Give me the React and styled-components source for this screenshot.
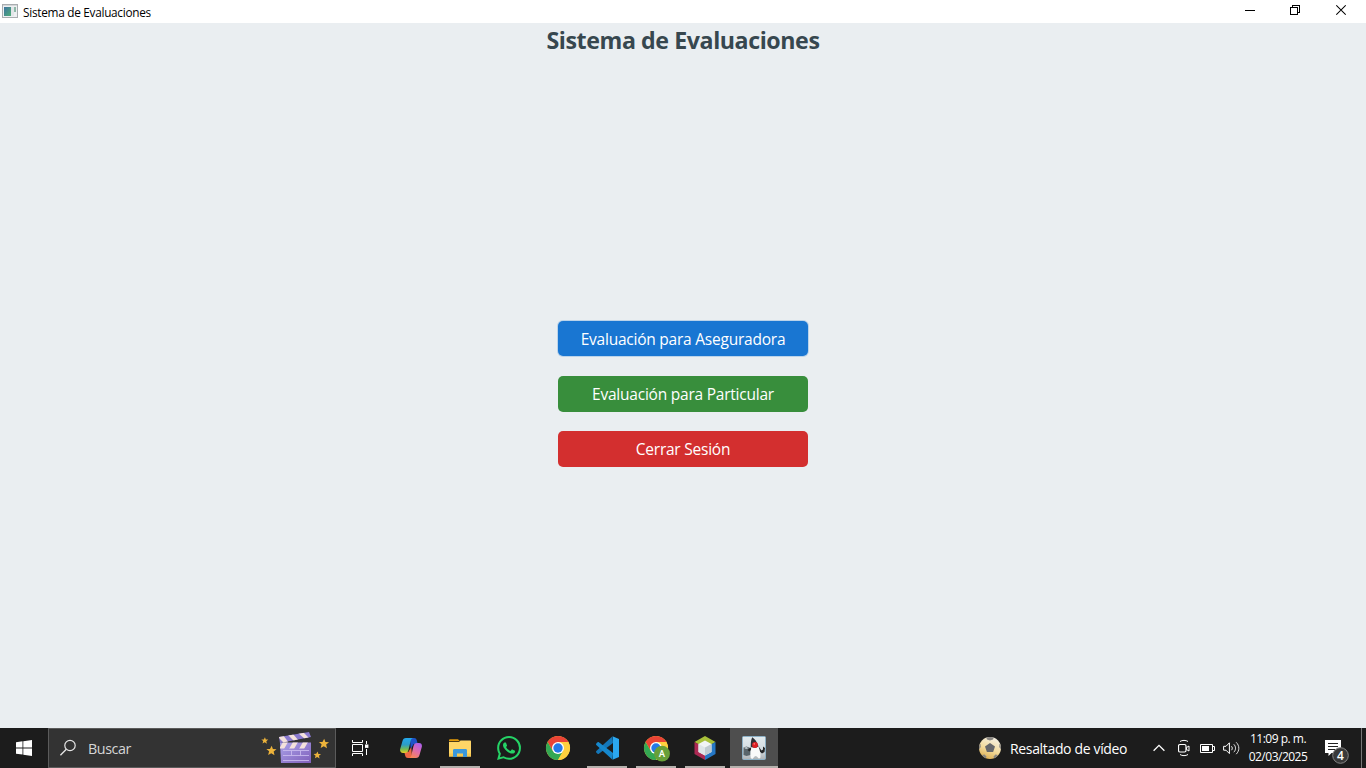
import React from "react";
import styled, { createGlobalStyle, css } from "styled-components";

const GlobalStyle = createGlobalStyle`
  * { box-sizing: border-box; }
  body { margin: 0; overflow: hidden; font-family: "Open Sans", "Noto Sans", sans-serif; }
  svg { display: block; flex: none; }
`;

const Screen = styled.div`
  width: 1366px;
  height: 768px;
  display: flex;
  flex-direction: column;
  background: #eaeef1;
`;

const TitleBar = styled.header`
  height: 23px;
  flex: none;
  display: flex;
  align-items: center;
  background: #fff;
  padding-left: 2px;
`;

const TitleIcon = styled.div`
  padding-bottom: 2px;
`;

const WindowTitle = styled.span`
  margin-left: 5px;
  flex: 1;
  font-size: 11.8px;
  line-height: 22px;
  letter-spacing: -0.28px;
  color: #000;
`;

const WindowButton = styled.button`
  width: ${(p) => p.$width}px;
  height: 23px;
  padding: 0;
  border: 0;
  background: none;
  display: flex;
  justify-content: center;
`;

const Content = styled.main`
  flex: 1;
  display: flex;
  flex-direction: column;
  align-items: center;
`;

const Heading = styled.h1`
  margin: 0;
  height: 35px;
  font-size: 23.2px;
  line-height: 34px;
  font-weight: 700;
  letter-spacing: -0.42px;
  color: #37474f;
`;

const Actions = styled.nav`
  flex: 1;
  display: flex;
  flex-direction: column;
  padding-top: 263px;
  gap: 19px;
`;

const ActionButton = styled.button`
  width: 250px;
  height: 36px;
  padding: 0;
  border: 0;
  border-radius: 5px;
  background: ${(p) => p.$color};
  color: #fff;
  font-family: inherit;
  font-size: 15.5px;
  line-height: 36px;
  letter-spacing: -0.23px;
  ${(p) =>
    p.$focused &&
    css`
      height: 35px;
      margin-bottom: 1px;
      box-shadow: 0 0 0 1px rgba(25, 118, 210, 0.22);
    `}
`;

const TaskBar = styled.footer`
  height: 40px;
  flex: none;
  display: flex;
  background: #1c1c1c;
  color: #fff;
`;

const TaskSlot = styled.div`
  width: 48px;
  height: 40px;
  flex: none;
  margin-left: ${(p) => p.$gap || 0}px;
  display: flex;
  align-items: center;
  justify-content: center;
  background: ${(p) => (p.$active ? "#4e4e4e" : "transparent")};
  ${(p) =>
    p.$running &&
    css`
      background-image: linear-gradient(#b5b1ad, #b5b1ad);
      background-size: ${p.$active ? 48 : 40}px 2px;
      background-position: center bottom;
      background-repeat: no-repeat;
    `}
`;

const SearchBox = styled.div`
  width: 288px;
  height: 40px;
  flex: none;
  display: flex;
  align-items: center;
  padding: 0 4px 0 10px;
  border: 1px solid #5b5b5b;
  background: #333;
`;

const SearchText = styled.span`
  flex: 1;
  margin-left: 11px;
  font-size: 14.3px;
  letter-spacing: -0.4px;
  color: #d6d6d6;
`;

const Tray = styled.div`
  margin-left: auto;
  display: flex;
  align-items: center;
`;

const NewsText = styled.span`
  width: 118px;
  margin-left: 9px;
  margin-right: 25px;
  font-size: 14px;
  white-space: nowrap;
  letter-spacing: -0.34px;
`;

const TrayIcon = styled.div`
  width: ${(p) => p.$width}px;
  height: 40px;
  flex: none;
`;

const Clock = styled.div`
  width: 74px;
  margin-right: 9px;
  text-align: center;
  font-size: 12px;
  line-height: 18px;
  padding-bottom: 1px;
  letter-spacing: -0.5px;
  white-space: nowrap;
`;

const ShowDesktop = styled.div`
  width: 5px;
  height: 40px;
  border-left: 1px solid #777;
`;

const Svg = ({ w, h, children, ...rest }) => (
  <svg width={w} height={h} viewBox={`0 0 ${w} ${h}`} fill="none" {...rest}>{children}</svg>
);

const AppIcon = () => (
  <Svg w={16} h={14}>
    <defs>
      <linearGradient id="pane" x1="0" y1="0" x2="1" y2="1">
        <stop stopColor="#3e73a0" /><stop offset="1" stopColor="#4fae78" />
      </linearGradient>
    </defs>
    <rect x=".5" y=".5" width="15" height="13" fill="#eef0f2" stroke="#a9adb0" />
    <path d="M1 1.5h14" stroke="#d4d6d8" />
    <rect x="2" y="3" width="7" height="9" fill="url(#pane)" />
    <rect x="9" y="3" width="3" height="9" fill="#e2e5e8" />
    <rect x="12" y="3" width="2" height="5" fill="#8fb9a8" />
  </Svg>
);

const MinimizeIcon = () => (
  <Svg w={10} h={23}><path d="M0 10.5h10" stroke="#000" /></Svg>
);
const RestoreIcon = () => (
  <Svg w={10} h={23} shapeRendering="crispEdges">
    <path d="M.5 7.5h7v7h-7zM2.5 7.5v-2h7v7h-2" stroke="#000" />
  </Svg>
);
const CloseIcon = () => (
  <Svg w={10} h={23}><path d="M.3 5.3l9.400 9.400M9.700 5.300L.3 14.700" stroke="#000" strokeWidth="1.100" /></Svg>
);

const WindowsIcon = () => (
  <Svg w={16} h={16}>
    <path fill="#fff" d="M0 2.2L6.500 1.300v6.200H0zM7.300 1.200L16 0v7.500H7.300zM0 8.400h6.500v6.200L0 13.800zM7.300 8.400H16V16l-8.700-1.200z" />
  </Svg>
);

const SearchIcon = () => (
  <Svg w={18} h={18}>
    <circle cx="11" cy="6.5" r="5.2" stroke="#e6e6e6" strokeWidth="1.2" />
    <path d="M7.300 10.300L1.400 16.300" stroke="#e6e6e6" strokeWidth="1.3" />
  </Svg>
);

const Star = ({ x, y, s = 1 }) => (
  <path
    transform={`translate(${x} ${y}) scale(${s})`}
    d="M.7-5.100L2-1.600l3.800.2-3 2.500L3.700 5 .3 2.800-3 4.700l1-3.800-2.900-2.500 3.800-.1z"
    fill="#edb33b"
  />
);

const ClapperIcon = () => (
  <Svg w={70} h={38}>
    <defs>
      <linearGradient id="clap" x1="0" y1="0" x2="1" y2="1">
        <stop stopColor="#aaa2e9" /><stop offset="1" stopColor="#8060bb" />
      </linearGradient>
      <clipPath id="armClip"><path d="M18 8L48 3l2 5-31 6z" /></clipPath>
      <clipPath id="barClip"><path d="M19 13.500h31v6H19z" /></clipPath>
    </defs>
    <path d="M19 13.500h31v20.500H20z" fill="url(#clap)" />
    <path d="M18 8L48 3l2 5-31 6z" fill="#8979ce" />
    <g clipPath="url(#armClip)" fill="#f4e2dc">
      <path d="M17 8l5-2 6 8h-5zM27 6l5-1 6 7h-5zM37 4l5-1 7 7h-5z" />
    </g>
    <g clipPath="url(#barClip)" fill="#f4e2dc">
      <path d="M22 13h5l-4 7h-5zM32 13h5l-4 7h-5zM42 13h5l-4 7h-5z" />
    </g>
    <path d="M22 21.500h26M22 26.500h26M22 31.500h26M30.500 21.500v5M39.500 21.500v5" stroke="#c7b9ed" strokeWidth=".9" />
    <Star x={3.5} y={11.5} s={0.65} />
    <Star x={10} y={21.5} s={0.95} />
    <Star x={62.5} y={14.5} s={0.95} />
    <Star x={56} y={26} s={0.7} />
  </Svg>
);

const TaskViewIcon = () => (
  <Svg w={17} h={16}>
    <path d="M.5 0v2.500h10V0M.5 16v-2.500h10V16M.5 4.500h10v7H.5zM14.500 1v3M14.500 9v6" stroke="#fff" />
    <rect x="13" y="4.5" width="3.4" height="3.4" fill="#fff" />
  </Svg>
);

const CopilotIcon = () => (
  <Svg w={22} h={22}>
    <defs>
      <linearGradient id="cpl" x1="0" y1="0" x2="0" y2="1">
        <stop stopColor="#24a9ed" /><stop offset=".45" stopColor="#2c9dc6" /><stop offset=".75" stopColor="#75bc51" /><stop offset="1" stopColor="#eccd25" />
      </linearGradient>
      <linearGradient id="cpr" x1=".8" y1="0" x2=".3" y2="1">
        <stop stopColor="#ab60ed" /><stop offset=".5" stopColor="#df6bae" /><stop offset="1" stopColor="#f78556" />
      </linearGradient>
    </defs>
    <path d="M10 1h4c2 0 2.500 1 3 3l.7 3h-4l-3 5z" fill="#1e53c8" />
    <path d="M12 21H8c-2 0-2.500-1-3-3l-.7-3h4l3-5z" fill="#ef6844" />
    <path d="M6 1h7c-1.500.3-2 1.500-2.400 3L8.500 13c-.5 2-1.500 3-3.500 3H3C.5 16-.3 14 .2 12L2.500 4C3 2 4 1 6 1z" fill="url(#cpl)" />
    <path d="M16 21H9c1.500-.3 2-1.500 2.400-3L13.500 9c.5-2 1.500-3 3.500-3h2c2.500 0 3.300 2 2.800 4L19.500 18c-.5 2-1.500 3-3.500 3z" fill="url(#cpr)" />
  </Svg>
);

const FolderIcon = () => (
  <Svg w={22} h={20}>
    <path d="M0 2.500C0 1.700.5 1.200 1.300 1.200H9l2 2H0z" fill="#e39a09" />
    <path d="M0 4h10l1.500-1.500H21c.6 0 1 .4 1 1V18.500H0z" fill="#ffd667" />
    <path d="M0 15.500h22v3H0z" fill="#f7c851" />
    <path d="M4 19V12.500c0-1 .5-1.500 1.500-1.500h11c1 0 1.500.5 1.500 1.500V19h-4v-3.500H8V19z" fill="#3b98dc" />
  </Svg>
);

const WhatsAppIcon = () => (
  <svg width="24" height="24" viewBox="0 0 24 24">
    <path fill="#25d366" d="M17.472 14.382c-.297-.149-1.758-.867-2.03-.967-.273-.099-.471-.148-.67.15-.197.297-.767.966-.94 1.164-.173.199-.347.223-.644.075-.297-.15-1.255-.463-2.39-1.475-.883-.788-1.480-1.761-1.653-2.059-.173-.297-.018-.458.130-.606.134-.133.298-.347.446-.520.149-.174.198-.298.298-.497.099-.198.050-.371-.025-.520-.075-.149-.669-1.612-.916-2.207-.242-.579-.487-.500-.669-.510-.173-.008-.371-.010-.570-.010-.198 0-.520.074-.792.372-.272.297-1.040 1.016-1.040 2.479 0 1.462 1.065 2.875 1.213 3.074.149.198 2.096 3.200 5.077 4.487.709.306 1.262.489 1.694.625.712.227 1.360.195 1.871.118.571-.085 1.758-.719 2.006-1.413.248-.694.248-1.289.173-1.413-.074-.124-.272-.198-.570-.347m-5.421 7.403h-.004a9.870 9.870 0 0 1-5.031-1.378l-.361-.214-3.741.982.998-3.648-.235-.374a9.860 9.860 0 0 1-1.510-5.260c.001-5.450 4.436-9.884 9.888-9.884 2.640 0 5.122 1.030 6.988 2.898a9.825 9.825 0 0 1 2.893 6.994c-.003 5.450-4.437 9.884-9.885 9.884m8.413-18.297A11.815 11.815 0 0 0 12.050 0C5.495 0 .160 5.335.157 11.892c0 2.096.547 4.142 1.588 5.945L.057 24l6.305-1.654a11.882 11.882 0 0 0 5.683 1.448h.005c6.554 0 11.890-5.335 11.893-11.893a11.821 11.821 0 0 0-3.480-8.413z" />
  </svg>
);

const ChromeIcon = ({ badge }) => (
  <Svg w={24} h={24} overflow="visible">
    <circle cx="12" cy="12" r="12" fill="#ffcd40" />
    <path d="M1.600 6A12 12 0 0 1 22.400 6H12L6.800 15z" fill="#ea4335" />
    <path d="M1.600 6A12 12 0 0 0 12 24l5.200-9L12 17.500 6.800 15z" fill="#34a853" />
    <path d="M12 6h10.400A12 12 0 0 1 12 24l5.200-9z" fill="#ffd13e" />
    <circle cx="12" cy="12" r="6" fill="#fff" />
    <circle cx="12" cy="12" r="4.7" fill="#2579e8" />
    {badge && (
      <g>
        <circle cx="18" cy="17.7" r="7.9" fill="#689f38" />
        <text x="18" y="21.2" textAnchor="middle" fontFamily="Roboto, sans-serif" fontSize="9.5" fontWeight="500" fill="#fff">A</text>
      </g>
    )}
  </Svg>
);

const CodeIcon = () => (
  <Svg w={24} h={24}>
    <path d="M17.500.2L1.300 15c-.5.5-.5 1 0 1.500l1.300 1.200c.4.3.9.3 1.300 0L18 7z" fill="#1477b9" />
    <path d="M17.500 23.800L1.300 9c-.5-.5-.5-1 0-1.500l1.300-1.200c.4-.3.9-.3 1.300 0L18 17z" fill="#1688cd" />
    <path d="M17.500.2L24 3v18l-6.500 2.800c.4-.3.5-.8.5-1.300v-21c0-.5-.1-1-.5-1.300z" fill="#2ba7ef" />
  </Svg>
);

const NetBeansIcon = () => (
  <Svg w={22} h={24}>
    <path d="M11 0l10.500 6L11 12 .5 6z" fill="#a9c13a" />
    <path d="M.5 6L11 12v12L.5 18z" fill="#ac2953" />
    <path d="M21.500 6L11 12v12l10.500-6z" fill="#2577c5" />
    <path d="M11 4.500L17.500 8v8L11 19.500 4.500 16V8z" fill="#f1f4f5" />
    <path d="M4.500 8L11 11.500v8L4.500 16z" fill="#dfe6e8" />
    <path d="M11 11.500L17.500 8v8L11 19.500z" fill="#c0cbd1" />
  </Svg>
);

const DukeIcon = () => (
  <Svg w={24} h={24}>
    <defs>
      <linearGradient id="dukeBg" x1="0" y1="0" x2="0" y2="1">
        <stop stopColor="#e2ebef" /><stop offset=".6" stopColor="#d3dbe0" /><stop offset="1" stopColor="#aeb2b5" />
      </linearGradient>
    </defs>
    <rect x=".5" y=".5" width="23" height="23" rx="1" fill="url(#dukeBg)" stroke="#8cb0c6" />
    <path d="M1.500 11.500l3-1 4 1.500v7l-4 1-3-1z" fill="#59656b" />
    <path d="M2 11.700l2.500-.6 2 1.200-2.500.8z" fill="#c5cdd1" />
    <path d="M8.500 11.500L5.500 14l2 1.500 2-2" fill="#262829" />
    <path d="M17 11l2.500 3.500 1.500-1v-3l2 1.500-.5 4-2.500 1.500-3.500-3z" fill="#242628" />
    <path d="M10.200 1.200c2.500 1.600 4.800 4.500 6 8.300l1 4-4.200-1-4 .5c-.5-4.500-.3-8.600 1.200-11.800z" fill="#303036" />
    <path d="M9.300 11c2.200 1.300 5 1 7-.5 1.400 2.500 2.700 8 2 11.500l-1.500.6c-1.500-1.200-2-2.500-3-2.500-1.300 0-2 1.700-3.500 2.900l-1.500-1c-.8-4 .1-8 .5-11z" fill="#fafafa" />
    <circle cx="13" cy="9" r="2.9" fill="#df1f23" />
    <circle cx="12.3" cy="7.9" r=".8" fill="#ff7772" />
  </Svg>
);

const BallIcon = () => (
  <Svg w={22} h={22}>
    <defs>
      <linearGradient id="ball" x1=".7" y1="0" x2=".3" y2="1">
        <stop stopColor="#f5f1e7" /><stop offset=".55" stopColor="#f3db9d" /><stop offset="1" stopColor="#ddae50" />
      </linearGradient>
      <clipPath id="ballClip"><circle cx="11" cy="11" r="11" /></clipPath>
    </defs>
    <circle cx="11" cy="11" r="11" fill="url(#ball)" />
    <g clipPath="url(#ballClip)" fill="#888581">
      <path d="M7 0h8l-1 2.500-3 1-3-1zM0 6.500l1.500.5.3 3L0 12.500zM22 6.500l-1.500.5-.3 3 1.800 2.500zM3 18l2.500-.5 2 2-1 3zM19 18l-2.500-.5-2 2 1 3z" />
    </g>
    <path d="M11 6l5 3.600-1.900 5.400H7.900L6 9.600z" fill="#66676b" />
  </Svg>
);

const ChevronIcon = () => (
  <Svg w={12} h={40}><path d="M.6 22.800L6 17.400l5.400 5.400" stroke="#fff" strokeWidth="1.3" /></Svg>
);
const MeetIcon = () => (
  <Svg w={12} h={40}>
    <rect x=".5" y="16.5" width="7.5" height="7.5" rx="1.5" stroke="#fff" strokeWidth="1.2" />
    <path d="M8.500 19.500l2.500-1.500v5l-2.500-1.500zM2 13.500c2-1.500 6-1.500 8 0M2 26.500c2 1.500 6 1.500 8 0" stroke="#fff" />
  </Svg>
);
const BatteryIcon = () => (
  <Svg w={16} h={40}>
    <path d="M.5 16.500h12v8H.5zM13 18.500h1.500v4H13" stroke="#fff" />
    <rect x="2" y="18" width="7" height="5" fill="#fff" />
  </Svg>
);
const VolumeIcon = () => (
  <Svg w={17} h={40}>
    <path d="M.6 18.300H3l3.400-3.500v10.800L3 22.200H.6z" stroke="#fff" />
    <path d="M8.500 18.300c1 1.200 1 2.700 0 3.900" stroke="#fff" />
    <path d="M10.800 16.300c2.300 2.300 2.300 5.600 0 7.900" stroke="#eee" />
    <path d="M13.200 14.300c3.500 3.500 3.500 8.400 0 11.900" stroke="#ddd" />
  </Svg>
);
const NotificationsIcon = () => (
  <Svg w={26} h={40}>
    <path d="M1 12h16v13H7.500L4.500 28v-3H1z" fill="#fff" />
    <path d="M4 15.500h10M4 18.500h10M4 21.500h7" stroke="#222" />
    <circle cx="16.500" cy="27.500" r="7.800" fill="#393939" stroke="#858585" />
    <text x="16.500" y="31.800" textAnchor="middle" fontFamily="Open Sans, sans-serif" fontSize="12" fontWeight="600" fill="#fff">4</text>
  </Svg>
);

export default function App() {
  return (
    <Screen>
      <GlobalStyle />
      <TitleBar>
        <TitleIcon><AppIcon /></TitleIcon>
        <WindowTitle>Sistema de Evaluaciones</WindowTitle>
        <WindowButton $width={45}><MinimizeIcon /></WindowButton>
        <WindowButton $width={45}><RestoreIcon /></WindowButton>
        <WindowButton $width={48}><CloseIcon /></WindowButton>
        <WindowButton $width={1} aria-hidden="true" />
      </TitleBar>
      <Content>
        <Heading>Sistema de Evaluaciones</Heading>
        <Actions>
          <ActionButton $color="#1976d2" $focused>Evaluación para Aseguradora</ActionButton>
          <ActionButton $color="#388e3c">Evaluación para Particular</ActionButton>
          <ActionButton $color="#d32f2f">Cerrar Sesión</ActionButton>
        </Actions>
      </Content>
      <TaskBar>
        <TaskSlot><WindowsIcon /></TaskSlot>
        <SearchBox>
          <SearchIcon />
          <SearchText>Buscar</SearchText>
          <ClapperIcon />
        </SearchBox>
        <TaskSlot><TaskViewIcon /></TaskSlot>
        <TaskSlot $gap={3}><CopilotIcon /></TaskSlot>
        <TaskSlot $gap={1} $running><FolderIcon /></TaskSlot>
        <TaskSlot $gap={1}><WhatsAppIcon /></TaskSlot>
        <TaskSlot $gap={1}><ChromeIcon /></TaskSlot>
        <TaskSlot $gap={1} $running><CodeIcon /></TaskSlot>
        <TaskSlot $gap={1} $running><ChromeIcon badge /></TaskSlot>
        <TaskSlot $gap={1} $running><NetBeansIcon /></TaskSlot>
        <TaskSlot $gap={1} $running $active><DukeIcon /></TaskSlot>
        <Tray>
          <BallIcon />
          <NewsText>Resaltado de vídeo</NewsText>
          <TrayIcon $width={25}><ChevronIcon /></TrayIcon>
          <TrayIcon $width={22}><MeetIcon /></TrayIcon>
          <TrayIcon $width={23}><BatteryIcon /></TrayIcon>
          <TrayIcon $width={18}><VolumeIcon /></TrayIcon>
          <Clock>11:09 p. m.<br />02/03/2025</Clock>
          <TrayIcon $width={37}><NotificationsIcon /></TrayIcon>
          <ShowDesktop />
        </Tray>
      </TaskBar>
    </Screen>
  );
}
